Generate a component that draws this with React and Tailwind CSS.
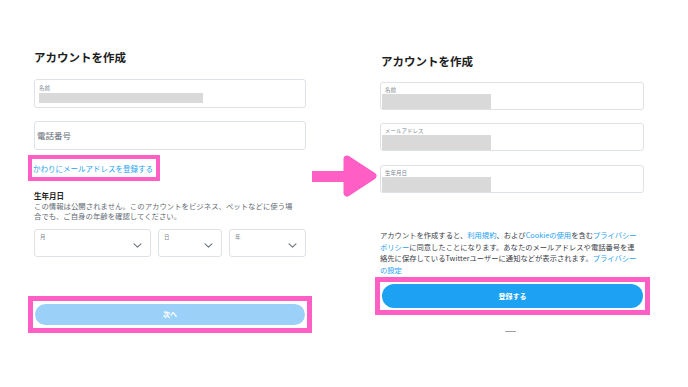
import React from 'react';

const FONT = { fontFamily: '"Noto Sans CJK JP", "Noto Sans", sans-serif' };

function Chevron() {
  return (
    <svg width="9" height="5" viewBox="0 0 9 5" className="shrink-0">
      <polyline points="1,0.8 4.5,4.2 8,0.8" fill="none" stroke="#6b757e" strokeWidth="1.1" strokeLinecap="round" strokeLinejoin="round" />
    </svg>
  );
}

function SelectBox({ label, width }) {
  return (
    <div className={`${width} h-[28px] border border-[#dde2e7] rounded-[3px] flex items-start justify-between pl-[5px] pr-[8px] pt-[3px]`}>
      <span className="text-[5.5px] leading-[8px] text-[#7d8790]">{label}</span>
      <div className="mt-[10px]">
        <Chevron />
      </div>
    </div>
  );
}

function FilledField({ label }) {
  return (
    <div className="h-[28px] border border-[#dde2e7] rounded-[3px] pt-[3px] pl-[1px]">
      <div className="text-[5.5px] leading-[8px] text-[#7d8790] pl-[3px]">{label}</div>
      <div className="w-[109px] h-[15px] bg-[#d9d9d9]" />
    </div>
  );
}

function Arrow() {
  return (
    <svg width="66" height="42" viewBox="0 0 66 42" className="overflow-visible">
      <rect x="0" y="16" width="36" height="11" fill="#ff5fc4" />
      <polygon points="35,4 61,21 35,38" fill="#ff5fc4" stroke="#ff5fc4" strokeWidth="7" strokeLinejoin="round" />
    </svg>
  );
}

function Link({ children }) {
  return <span className="text-[#1da1f2]">{children}</span>;
}

export default function App() {
  return (
    <div className="w-[688px] h-[387px] bg-white flex overflow-hidden" style={FONT}>
      {/* left: step 1 */}
      <div className="ml-[28px] w-[284px] pt-[49px] flex flex-col">
        <h1 className="mx-[6px] text-[11.5px] leading-[16px] font-bold text-[#1c1e21]">アカウントを作成</h1>

        <div className="mx-[6px] mt-[14px] h-[29px] border border-[#dde2e7] rounded-[3px] pt-[4px] pl-[4px]">
          <div className="text-[5.5px] leading-[8px] text-[#7d8790]">名前</div>
          <div className="w-[164px] h-[10px] bg-[#d9d9d9] mt-[1px]" />
        </div>

        <div className="mx-[6px] mt-[13px] h-[29px] border border-[#dde2e7] rounded-[3px] flex items-center pl-[2px]">
          <span className="text-[8.5px] text-[#5f6a74]">電話番号</span>
        </div>

        <div className="mt-[5px] w-[132px] h-[26px] border-[4px] border-[#ff5fc4] flex items-center pl-[1px] pt-[2px]">
          <span className="text-[7.5px] text-[#1da1f2] whitespace-nowrap">かわりにメールアドレスを登録する</span>
        </div>

        <div className="mx-[6px] mt-[10px] text-[7.5px] leading-[10px] font-bold text-[#1c1e21]">生年月日</div>
        <p className="mx-[6px] text-[7.4px] leading-[10px] text-[#5f6a74]">
          この情報は公開されません。このアカウントをビジネス、ペットなどに使う場
          <br />
          合でも、ご自身の年齢を確認してください。
        </p>

        <div className="mx-[6px] mt-[8px] flex gap-[7px]">
          <SelectBox label="月" width="w-[117px]" />
          <SelectBox label="日" width="w-[64px]" />
          <SelectBox label="年" width="w-[77px]" />
        </div>

        <div className="mt-[39px] border-[5px] border-[#ff5fc4] bg-white px-[2px] py-[3px]">
          <div className="h-[21px] rounded-full bg-[#9bd1f9] flex items-center justify-center">
            <span className="text-[7px] font-bold text-white">次へ</span>
          </div>
        </div>
      </div>

      {/* arrow */}
      <div className="w-[63px] pt-[155px] shrink-0">
        <Arrow />
      </div>

      {/* right: step 2 */}
      <div className="w-[275px] pt-[53px] flex flex-col">
        <h1 className="ml-[6px] text-[11.5px] leading-[16px] font-bold text-[#1c1e21]">アカウントを作成</h1>

        <div className="ml-[5px] mr-[6px] mt-[13px] flex flex-col gap-[13px]">
          <FilledField label="名前" />
          <FilledField label="メールアドレス" />
          <div className="mt-[1px]">
            <FilledField label="生年月日" />
          </div>
        </div>

        <p className="ml-[5px] mt-[37px] text-[7.3px] leading-[11.7px] text-[#3b4148] whitespace-nowrap">
          アカウントを作成すると、<Link>利用規約</Link>、および<Link>Cookieの使用</Link>を含む<Link>プライバシー</Link>
          <br />
          <Link>ポリシー</Link>に同意したことになります。あなたのメールアドレスや電話番号を連
          <br />
          絡先に保存しているTwitterユーザーに通知などが表示されます。<Link>プライバシー</Link>
          <br />
          <Link>の設定</Link>
        </p>

        <div className="border-[5px] border-[#ff5fc4] bg-white px-[2px] py-[2px]">
          <div className="h-[24px] rounded-full bg-[#1da1f2] flex items-center justify-center">
            <span className="text-[7px] font-bold text-white">登録する</span>
          </div>
        </div>

        <div className="mt-[16px] ml-[130px] w-[11px] h-[1.5px] bg-[#9aa0a6] rounded-full" />
      </div>
    </div>
  );
}
